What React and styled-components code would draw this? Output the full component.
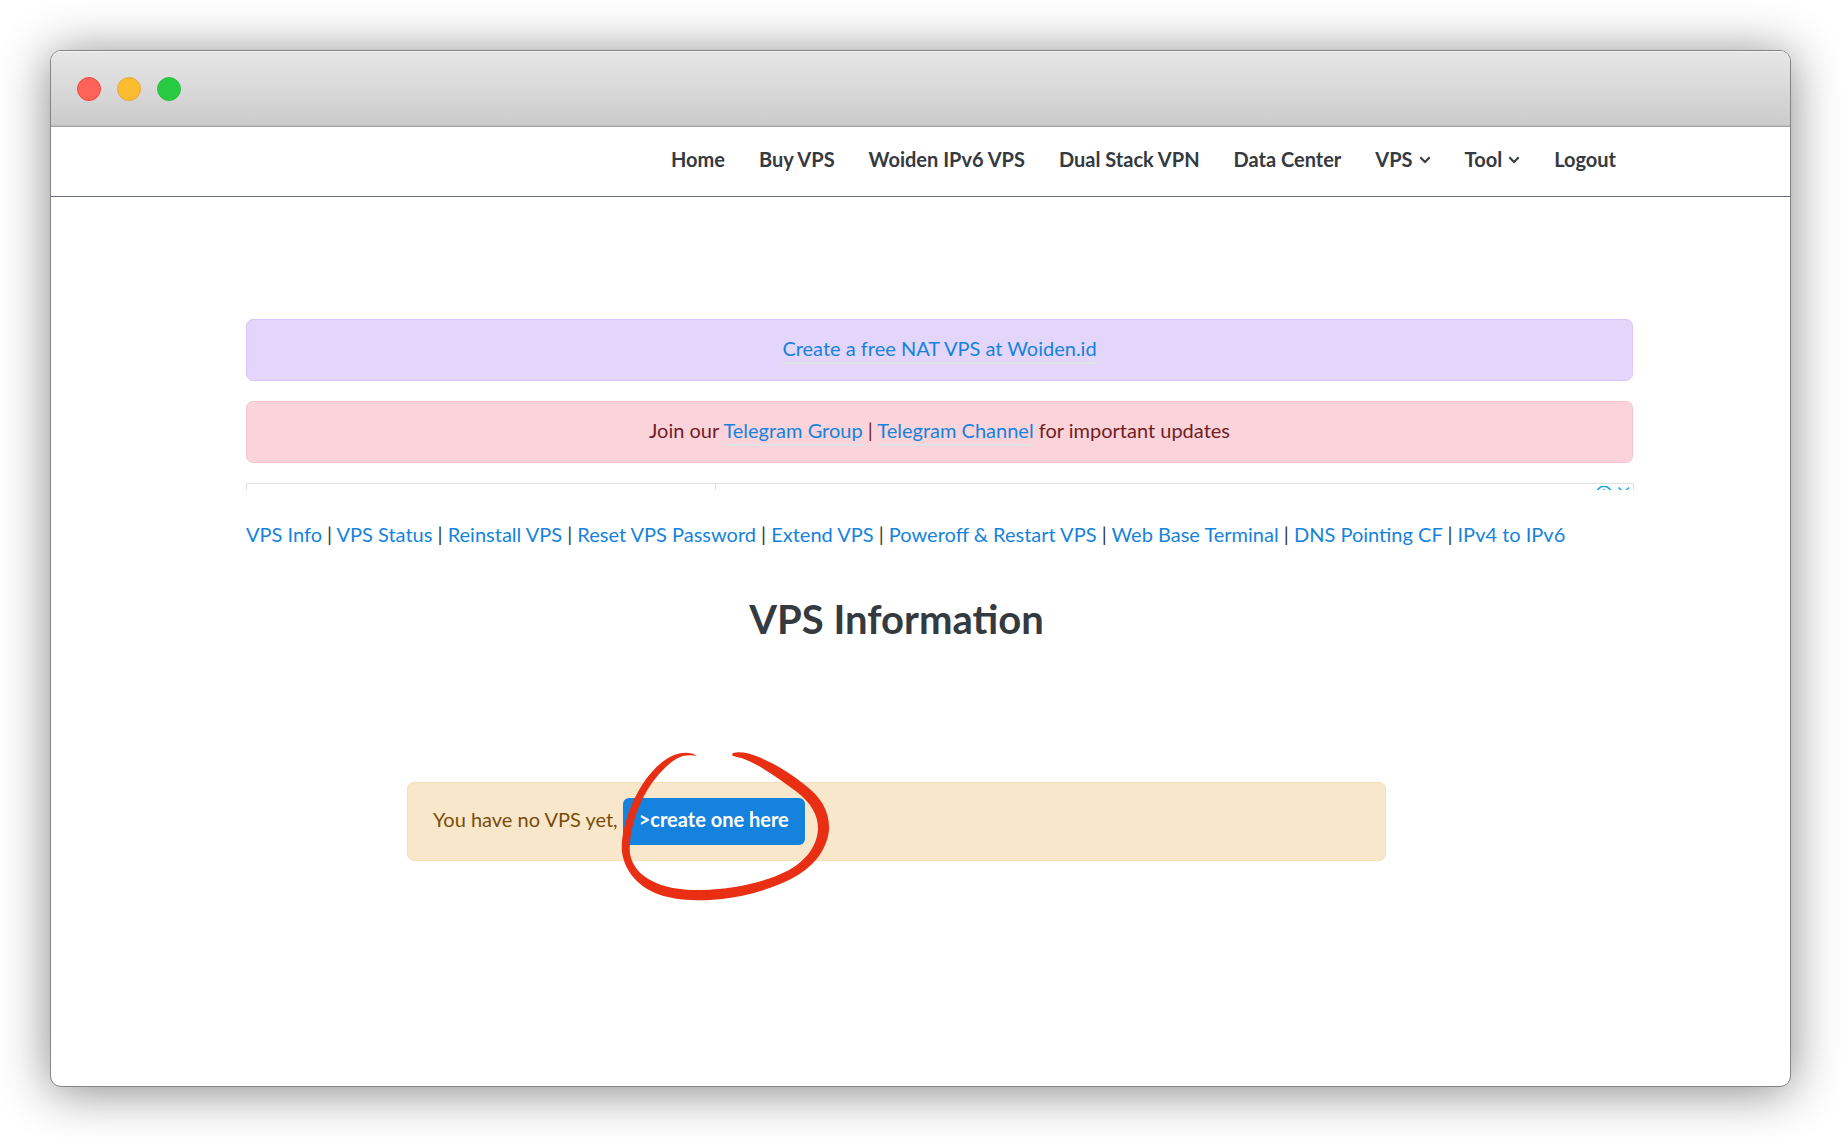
import React from "react";
import styled, { createGlobalStyle } from "styled-components";

const GlobalStyle = createGlobalStyle`
  *, *::before, *::after { box-sizing: border-box; }
  body {
    margin: 0;
    background: #fff;
    color: #343a40;
    font-family: Lato, "Liberation Sans", sans-serif;
    font-size: 20px;
    line-height: 30px;
  }
`;

const Desktop = styled.div`
  min-height: 100vh;
  padding: 50px;
  display: flex;
  overflow: hidden;
`;

const Window = styled.div`
  flex: 1;
  min-width: 0;
  display: flex;
  flex-direction: column;
  border: 1px solid #858585;
  border-radius: 11px;
  background: #fff;
  overflow: hidden;
  box-shadow: 0 4px 50px rgba(0, 0, 0, 0.48);
`;

const TitleBar = styled.div`
  display: flex;
  align-items: center;
  gap: 16px;
  height: 76px;
  padding: 0 26px;
  border-bottom: 1px solid #a3a3a3;
  background: linear-gradient(#e7e7e7, #cbcbcb);
  box-shadow: inset 0 1px 0 #f3f3f3, inset 0 -1px 0 #bdbdbd;
`;

const WindowButton = styled.button`
  width: 24px;
  height: 24px;
  padding: 0;
  border: 1px solid ${(p) => p.$edge};
  border-radius: 50%;
  background: ${(p) => p.$fill};
`;

const NavBar = styled.nav`
  display: flex;
  justify-content: flex-end;
  height: 70px;
  padding: 17px 157px 0 0;
  border-bottom: 1px solid #686e79;
`;

const NavLink = styled.a`
  display: flex;
  align-items: center;
  gap: 6px;
  height: 30px;
  padding: 0 17px;
  color: #343a40;
  font-weight: 700;
  text-decoration: none;
  white-space: nowrap;
`;

const ChevronIcon = styled.svg`
  width: 12px;
  height: 8px;
  margin-top: 2px;
`;

const Main = styled.main`
  padding: 122px 157px 0 195px;
`;

const tones = {
  primary: { fill: "#e4d6fb", edge: "#d9c6f9", text: "#4a2489" },
  danger: { fill: "#fad4da", edge: "#f8c3cc", text: "#721c24" },
  warning: { fill: "#f9e7cb", edge: "#f7dfb6", text: "#7a4c08" },
};

const Alert = styled.div`
  border: 1px solid ${(p) => tones[p.$tone].edge};
  border-radius: 7px;
  background: ${(p) => tones[p.$tone].fill};
  color: ${(p) => tones[p.$tone].text};
`;

const Banner = styled(Alert)`
  padding: 13px 25px 17px;
  margin-bottom: 20px;
  text-align: center;
`;

const Link = styled.a`
  color: #1583dd;
  text-decoration: none;
`;

const BannerLink = styled(Link)`
  padding-bottom: 2px;
  border-bottom: 2px solid #dfe3e3;
`;

const AdStrip = styled.div`
  display: flex;
  height: 7px;
  margin-right: -1px;
  border: 1px solid #e0e0e0;
  border-bottom: 0;
  overflow: hidden;
`;

const AdPane = styled.div`
  flex: 0 0 34%;
  margin-right: auto;
  border-right: 1px solid #e0e0e0;
  margin-left: -2px;
`;

const AdMarks = styled.svg`
  flex: none;
  width: 34px;
  height: 16px;
  margin: 2px 3px 0 0;
`;

const Column = styled.section`
  padding-right: 86px;
`;

const LinkRow = styled.p`
  height: 26px;
  margin: 29px 0 0;
  overflow: hidden;
  white-space: nowrap;
`;

const Title = styled.h1`
  margin: 50px 0 0;
  font-size: 40px;
  line-height: 48px;
  font-weight: 700;
  text-align: center;
`;

const Notice = styled(Alert)`
  display: flex;
  align-items: baseline;
  gap: 5px;
  max-width: 979px;
  padding: 15px 25px;
  margin: 139px auto 0;
`;

const CreateLink = styled.a`
  position: relative;
  padding: 6px 16px 11px;
  border-radius: 6px;
  background: #1583dd;
  color: #fff;
  font-weight: 700;
  text-decoration: none;
  white-space: nowrap;
`;

const Scribble = styled.svg`
  position: absolute;
  left: -2px;
  top: -49px;
  width: 210px;
  height: 152px;
  pointer-events: none;
`;

const Chevron = () => (
  <ChevronIcon viewBox="0 0 12 8" fill="none" aria-hidden="true">
    <path d="M1.3 1.3 L6 6 L10.7 1.3" stroke="#343a40" strokeWidth="2" />
  </ChevronIcon>
);

const navItems = [
  ["Home"],
  ["Buy VPS"],
  ["Woiden IPv6 VPS"],
  ["Dual Stack VPN"],
  ["Data Center"],
  ["VPS", true],
  ["Tool", true],
  ["Logout"],
];

const pageLinks = [
  "VPS Info",
  "VPS Status",
  "Reinstall VPS",
  "Reset VPS Password",
  "Extend VPS",
  "Poweroff & Restart VPS",
  "Web Base Terminal",
  "DNS Pointing CF",
  "IPv4 to IPv6",
];

export default function App() {
  return (
    <Desktop>
      <GlobalStyle />
      <Window>
        <TitleBar>
          <WindowButton aria-label="Close" $fill="#ff6259" $edge="#f04b3a" />
          <WindowButton aria-label="Minimize" $fill="#fbbc2f" $edge="#e8a63c" />
          <WindowButton aria-label="Zoom" $fill="#28ca41" $edge="#30c044" />
        </TitleBar>
        <NavBar>
          {navItems.map(([label, menu]) => (
            <NavLink href="#" key={label}>
              {label}
              {menu && <Chevron />}
            </NavLink>
          ))}
        </NavBar>
        <Main>
          <Banner $tone="primary">
            <BannerLink href="#">Create a free NAT VPS at Woiden.id</BannerLink>
          </Banner>
          <Banner $tone="danger">
            Join our <BannerLink href="#">Telegram Group</BannerLink> |{" "}
            <BannerLink href="#">Telegram Channel</BannerLink> for important updates
          </Banner>
          <AdStrip>
            <AdPane />
            <AdMarks viewBox="0 0 34 16" fill="none" stroke="#1ea7e8" strokeWidth="1.6" aria-hidden="true">
              <circle cx="8" cy="7.3" r="7" />
              <path d="M8 3v1.6M8 6.5v4M22.5 1.5l10 10M33 1.5l-10 10" />
            </AdMarks>
          </AdStrip>
          <LinkRow>
            {pageLinks.map((label, i) => (
              <React.Fragment key={label}>
                {i > 0 && " | "}
                <Link href="#">{label}</Link>
              </React.Fragment>
            ))}
          </LinkRow>
          <Column>
            <Title>VPS Information</Title>
            <Notice $tone="warning">
              <span>You have no VPS yet,</span>
              <CreateLink href="#">
                &gt;create one here
                <Scribble viewBox="0 0 210 152" aria-hidden="true">
                  <path
                    fill="#e82f14"
                    d="M76 7 C70 3 62 3 53 6 C34 14 16 38 7 66 C2 80 0 94 1 103 C4 126 23 143 47 148 C62 152 82 152 101 150 C126 147 150 140 170 130 C192 119 206 101 208 81 C209 63 200 48 184 36 C168 23 151 13 135 7 C127 4 119 2 112 4 L111 6 C113 8 118 8 123 10 C141 17 160 31 176 43 C190 54 197 66 197 80 C196 98 184 112 168 121 C145 133 115 140 80 141 C45 142 14 131 9 105 C7 87 15 59 27 40 C36 26 50 10 62 7 C67 6 71 6 76 7 Z"
                  />
                </Scribble>
              </CreateLink>
            </Notice>
          </Column>
        </Main>
      </Window>
    </Desktop>
  );
}
